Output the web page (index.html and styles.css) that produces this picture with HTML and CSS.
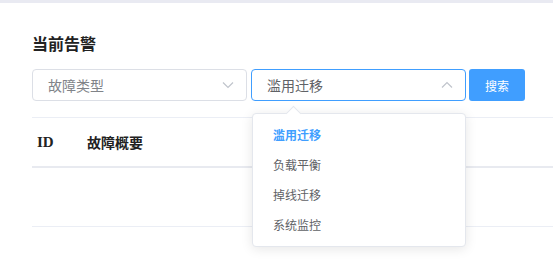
FILE: index.html
```html
<!DOCTYPE html>
<html lang="zh-CN">

<head>
    <meta charset="UTF-8">
    <meta name="viewport" content="width=device-width, initial-scale=1.0">
    <title>当前告警</title>
    <link rel="stylesheet" href="styles.css">
</head>

<body>
    <div class="topbar"></div>
    <div class="page">
        <h2 class="title">当前告警</h2>

        <div class="filters">
            <div class="select">
                <span class="select-text placeholder">故障类型</span>
                <svg class="arrow" width="12" height="8" viewBox="0 0 12 8">
                    <path d="M1 1.5 L6 6.5 L11 1.5" fill="none" stroke="#c0c4cc" stroke-width="1.2" />
                </svg>
            </div>
            <div class="select open">
                <span class="select-text">滥用迁移</span>
                <svg class="arrow" width="12" height="8" viewBox="0 0 12 8">
                    <path d="M1 6.5 L6 1.5 L11 6.5" fill="none" stroke="#c0c4cc" stroke-width="1.2" />
                </svg>
                <ul class="dropdown">
                    <li class="selected">滥用迁移</li>
                    <li>负载平衡</li>
                    <li>掉线迁移</li>
                    <li>系统监控</li>
                </ul>
            </div>
            <button class="btn">搜索</button>
        </div>

        <table class="table">
            <thead>
                <tr>
                    <th class="col-id">ID</th>
                    <th>故障概要</th>
                </tr>
            </thead>
            <tbody>
                <tr class="empty">
                    <td colspan="2"></td>
                </tr>
            </tbody>
        </table>
    </div>
</body>

</html>
```

FILE: styles.css
```css
body {
    margin: 0;
    min-height: 271px;
    background: #fff;
    font-family: "Noto Sans CJK SC", "Noto Sans", sans-serif;
}

.topbar {
    height: 3px;
    background: #e9eaf2;
}

.page {
    padding: 29px 0 0 32px;
}

.title {
    margin: 0;
    font-size: 16px;
    line-height: 22px;
    font-weight: 700;
    color: #222;
}

.filters {
    display: flex;
    align-items: center;
    gap: 4px;
    margin-top: 15px;
}

.select {
    position: relative;
    width: 186px;
    height: 30px;
    border: 1px solid #dcdfe6;
    border-radius: 4px;
    display: flex;
    align-items: center;
    justify-content: space-between;
    padding: 0 12px 0 15px;
}

.select.open {
    border-color: #409eff;
}

.select-text {
    font-size: 14px;
    color: #606266;
}

.select-text.placeholder {
    color: #808388;
}

.arrow {
    display: block;
}

.btn {
    width: 56px;
    height: 32px;
    margin-left: -1px;
    border: none;
    border-radius: 3px;
    background: #409eff;
    color: #fff;
    font-family: "Noto Sans CJK SC", sans-serif;
    font-size: 12px;
}

.dropdown {
    position: absolute;
    top: 43px;
    left: 0;
    width: 212px;
    margin: 0;
    padding: 6px 0;
    list-style: none;
    background: #fff;
    border: 1px solid #e4e7ed;
    border-radius: 4px;
    box-shadow: 0 2px 12px rgba(0, 0, 0, 0.1);
    z-index: 2;
}

.dropdown::before {
    content: "";
    position: absolute;
    top: -6px;
    left: 35px;
    width: 10px;
    height: 10px;
    background: #fff;
    border-left: 1px solid #e4e7ed;
    border-top: 1px solid #e4e7ed;
    transform: rotate(45deg);
}

.dropdown li {
    height: 30px;
    line-height: 30px;
    padding-left: 20px;
    font-size: 12px;
    color: #606266;
}

.dropdown li.selected {
    color: #409eff;
    font-weight: 700;
}

.table {
    width: 100%;
    margin-top: 16px;
    border-collapse: collapse;
    border-top: 1px solid #ebeef5;
}

.table th {
    height: 48px;
    text-align: left;
    font-size: 14px;
    font-weight: 700;
    color: #222;
    border-bottom: 2px solid #e8eaf0;
    padding: 0;
}

.table th.col-id {
    width: 50px;
    padding-left: 5px;
    font-family: "Liberation Serif", serif;
    font-size: 15px;
}

.table .empty td {
    height: 56px;
    border-bottom: 1px solid #ebeef5;
}
```
